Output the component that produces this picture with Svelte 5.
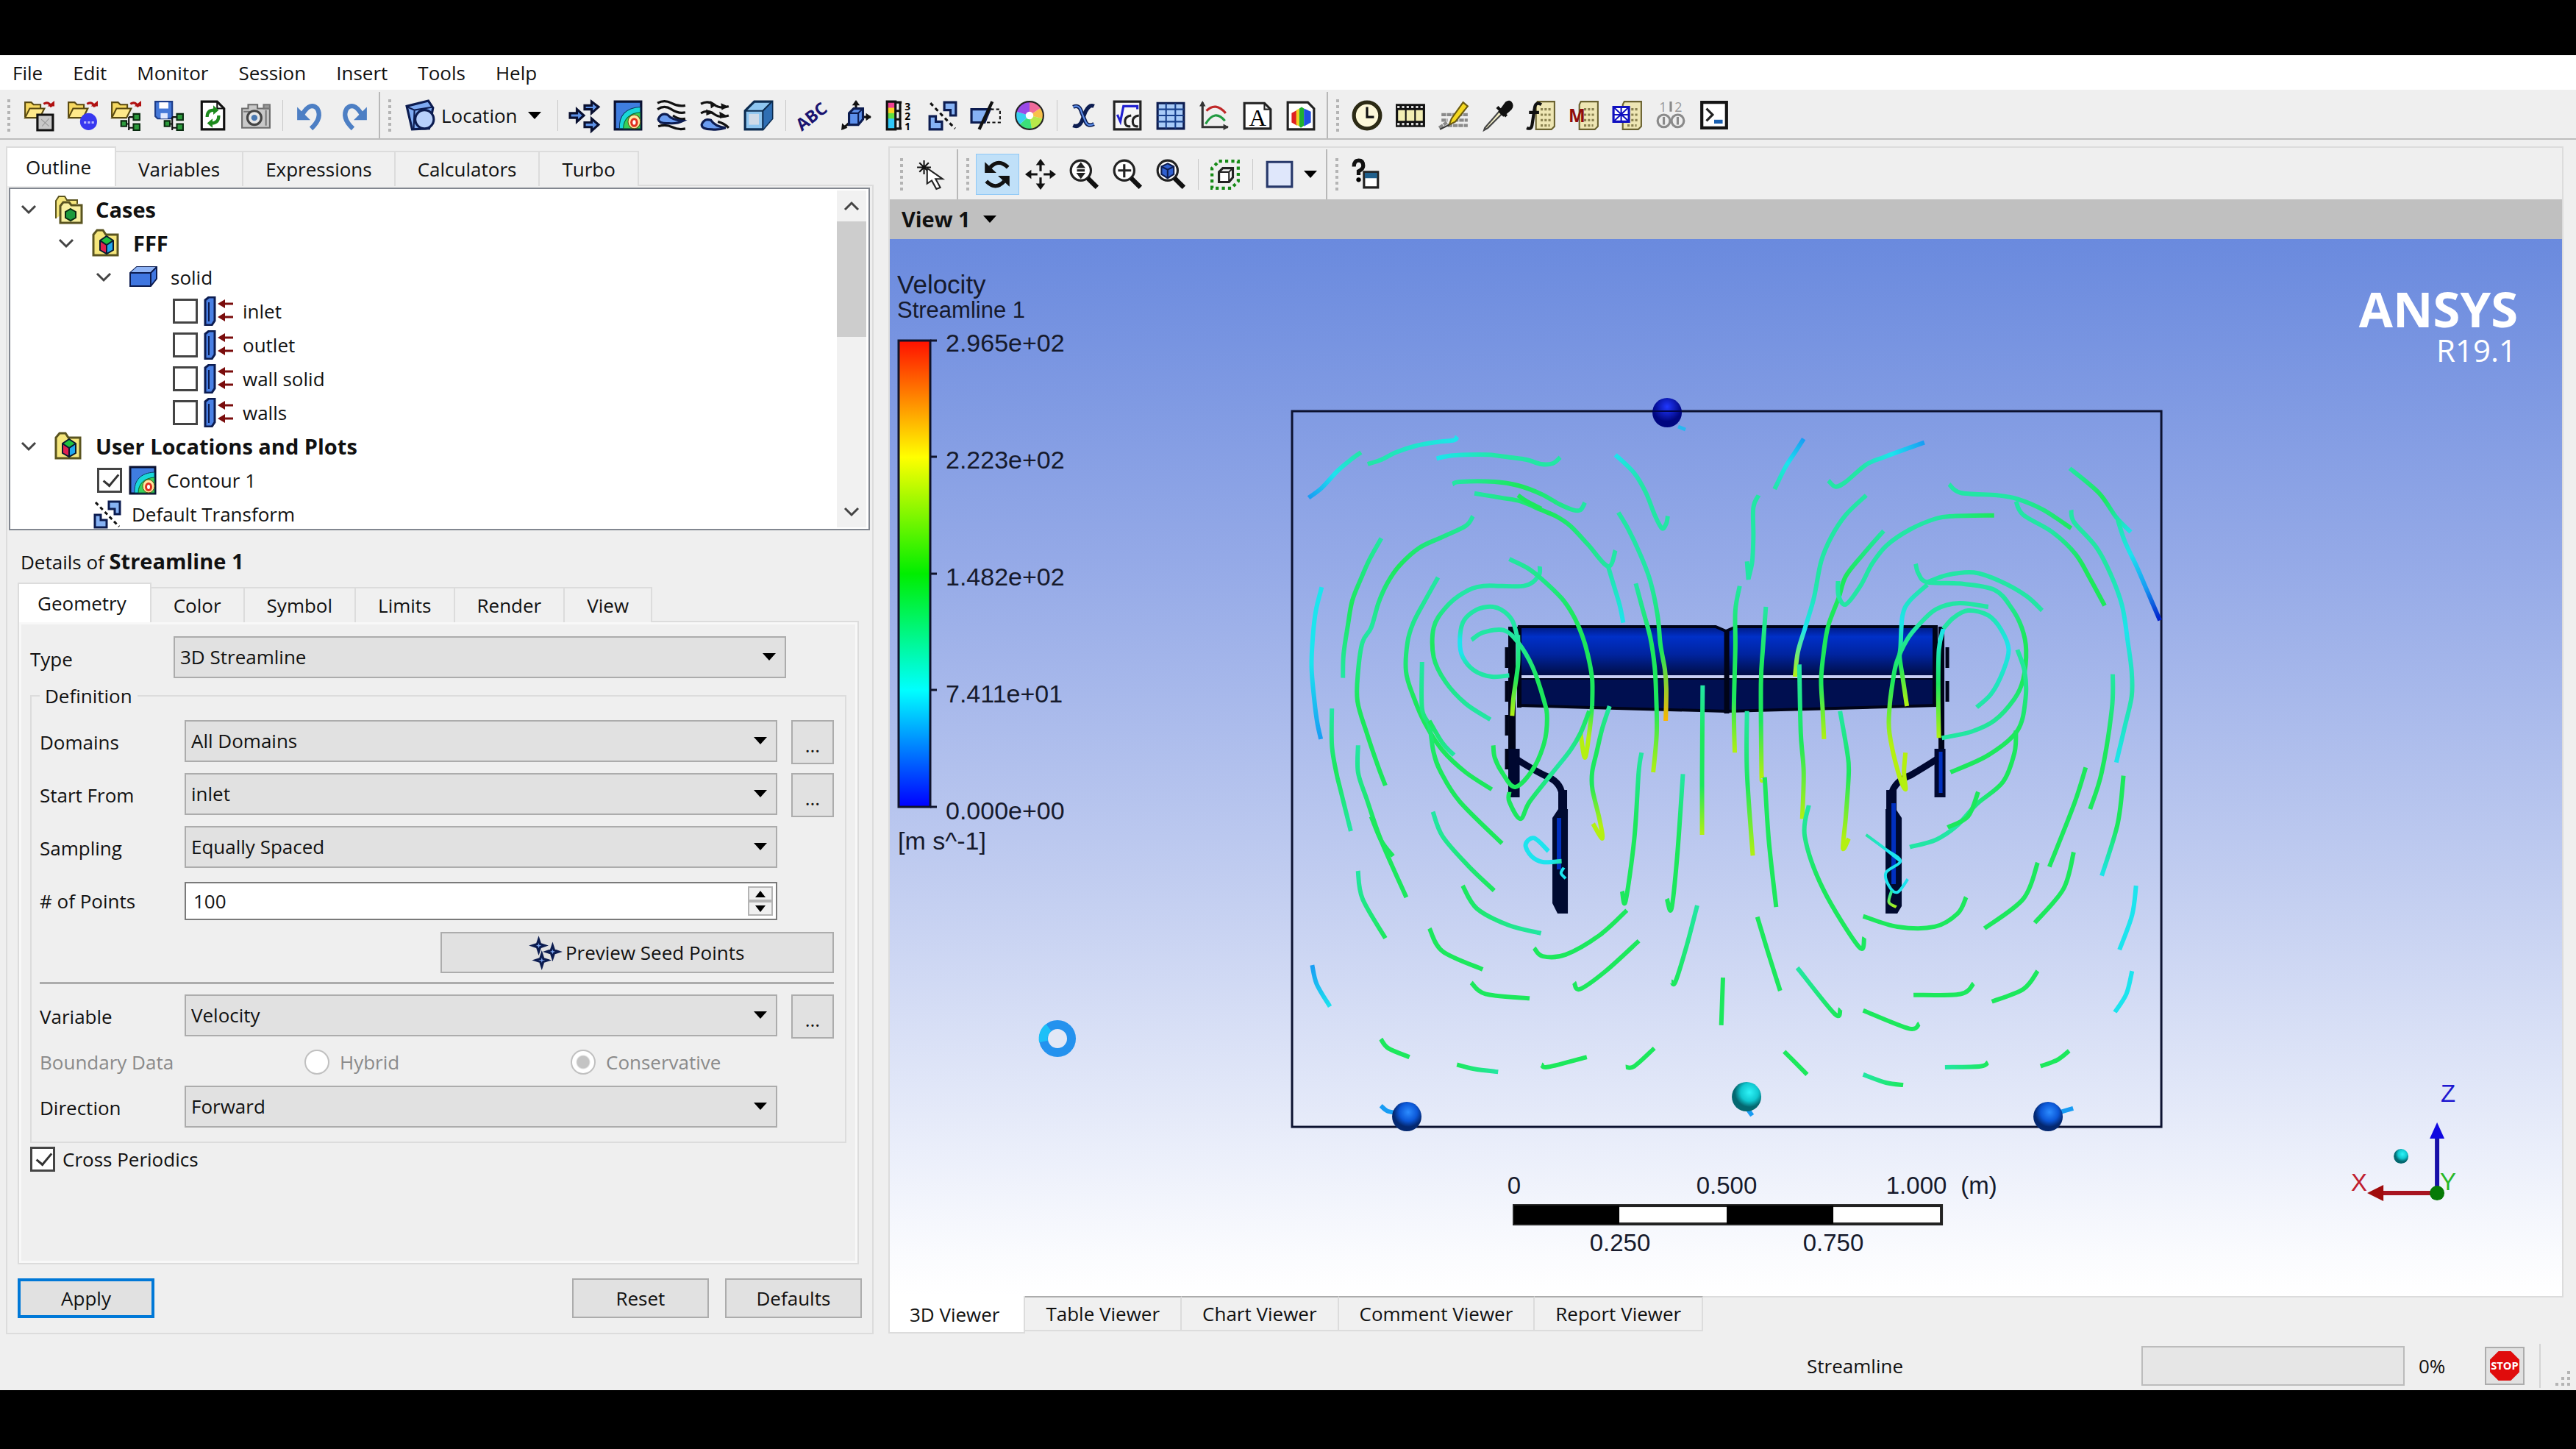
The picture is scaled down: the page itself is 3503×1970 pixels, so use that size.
<script>
  const menus = ['File', 'Edit', 'Monitor', 'Session', 'Insert', 'Tools', 'Help'];

  const folder =
    '<path d="M2 22V3h8l3 3h9v5" fill="#f6d860" stroke="#5a4a10" stroke-width="2"/><path d="M2 23 8 11h19l-6 12z" fill="#ffe98a" stroke="#5a4a10" stroke-width="2"/><path d="M26 5q7-4 10 4" fill="none" stroke="#b01010" stroke-width="3"/><path d="M31 8h9v-7z" fill="#b01010"/>';
  const nodes =
    '<path d="M18 31h6M24 22v17M24 22h6M24 36h6" fill="none" stroke="#111" stroke-width="2"/><g fill="#2c9a3c" stroke="#0a2a10" stroke-width="2"><path d="M14 27h7v7h-7zM30 18h8v8h-8zM30 31h8v8h-8z"/></g>';
  const contour =
    '<path d="M3 2h34v36H3z" fill="#3f7de0" stroke="#0a1030" stroke-width="3"/><path d="M9 37C8 20 17 10 36 9v28z" fill="#19d8d8" stroke="#0c3c60" stroke-width="1"/><path d="M14 37c0-12 8-20 22-21v21z" fill="#37d05a" stroke="#106030" stroke-width="1"/><ellipse cx="28" cy="28" rx="8" ry="9" fill="#ffe9a0" stroke="#605010" stroke-width="1"/><ellipse cx="28" cy="29" rx="5" ry="6" fill="#e03020"/><ellipse cx="28" cy="29" rx="2" ry="3" fill="#fff"/>';
  const transform =
    '<path d="M22 3h15v17h-7v-7h-8zM3 21h8v7h8v10H3z" fill="#86b2f4" stroke="#0c1c50" stroke-width="3"/><path d="M4 4 36 37" stroke="#111" stroke-width="3" stroke-dasharray="5 4"/>';
  const lens = '<circle cx="16" cy="15" r="13" fill="#fff" stroke="#222" stroke-width="3"/><path d="m25 25 12 12" stroke="#111" stroke-width="6"/>';
  const calc =
    '<path d="M16 2h22v32l-4 4H14V6z" fill="#eee6b4" stroke="#6a6230" stroke-width="2"/><path d="M20 12h14M20 19h14M20 26h14M20 33h12" stroke="#8a8250" stroke-width="3" stroke-dasharray="3 2"/>';
  const cubes =
    '<path d="m21 10 9 6-9 6-9-6z" fill="#20c040"/><path d="m12 16 9 6v12l-9-5z" fill="#e02050"/><path d="m30 16-9 6v12l9-5z" fill="#20a8f0"/><path d="m21 10 9 6v13l-9 5-9-5V16zM12 16l9 6 9-6M21 22v12" fill="none" stroke="#0a1a30" stroke-width="2"/>';
  const caseFolder = '<path d="M3 36V8l5-6h8l4 6h16v28z" fill="#f5e67c" stroke="#5a5420" stroke-width="3"/>';

  const icons = {
    openResults: folder + '<path d="M18 19h20v20H18z" fill="#c8c8c8" stroke="#111" stroke-width="3"/><path d="m23 25 10 9M33 24l-9 10" stroke="#999" stroke-width="1"/>',
    openState: folder + '<circle cx="28" cy="28" r="11" fill="#3838f0"/><path d="M22 29h13" stroke="#b8b8ff" stroke-width="3" stroke-dasharray="3 2"/>',
    openCase: folder + nodes,
    saveState: '<path d="M2 2h22v22H5l-3-3z" fill="#4478d8" stroke="#1c3c88" stroke-width="2"/><path d="M7 3h12v8H7z" fill="#fff"/><path d="M9 17h9v7H9z" fill="#dfe8ff"/>' + nodes,
    reload: '<path d="M6 2h20l9 9v27H6z" fill="#fff" stroke="#111" stroke-width="3"/><path d="M26 2v9h9" fill="none" stroke="#111" stroke-width="2"/><path d="M13 22q0-9 9-9M28 20q0 10-9 10" fill="none" stroke="#1d8a1d" stroke-width="4"/><path d="m21 7 7 6-7 6zM20 24l-7 6 7 6z" fill="#1d8a1d"/>',
    camera: '<path d="M2 11h8V6h12v5h16v25H2z" fill="#c9c9c9" stroke="#6c6c6c" stroke-width="2"/><path d="M30 6h8v5h-8zM4 15h8M33 13v20" fill="#999" stroke="#777" stroke-width="2"/><circle cx="18" cy="23" r="9" fill="#e8e8e8" stroke="#444" stroke-width="3"/><circle cx="18" cy="23" r="4" fill="#4a78b0"/>',
    undo: '<path d="M10 18Q20 2 29 11q7 12-8 26" fill="none" stroke="#4d7fc4" stroke-width="6"/><path d="M3 9v17h17z" fill="#4d7fc4"/>',
    redo: '<path d="M30 18Q20 2 11 11q-7 12 8 26" fill="none" stroke="#4d7fc4" stroke-width="6"/><path d="M37 9v17H20z" fill="#4d7fc4"/>',
    location: '<path d="m2 8 28-7 6 9-5 27-22 1z" fill="#7eaaf2" stroke="#0c1c50" stroke-width="3"/><path d="m3 9 9 4 24-4M12 13l-1 24" fill="none" stroke="#0c1c50" stroke-width="2"/><circle cx="25" cy="25" r="12" fill="#b8d0fa" stroke="#0c1c50" stroke-width="3"/>',
    vector: '<g fill="#5f93e8" stroke="#0a1030" stroke-width="3"><path d="M20 7h9V2l9 7-9 8v-5h-9zM1 17h9v-5l9 8-9 8v-5H1zM20 29h9v-5l9 8-9 8v-5h-9z"/></g>',
    contour,
    streamline: '<path d="M2 4q9-5 18 0t18 3M2 12q9-6 18 0t18 4M22 20q8 6 16 4M3 34q10-3 18 1t17 2" fill="none" stroke="#111" stroke-width="3"/><path d="M3 25q3-9 12-6 6 7 20 8-8 4-18 3-13 1-14-5z" fill="#6a9cf0" stroke="#0c1c50" stroke-width="3"/>',
    particle: '<path d="M2 5q9-5 17 1t19 2M2 17q9-5 17 1t19 2M24 28q8 2 14 8" fill="none" stroke="#111" stroke-width="3"/><path d="M14 1l8 5-7 5zM28 4l9 4-8 5zM9 12l8 5-8 3zM26 15l9 5-8 4z" fill="#111"/><path d="M3 32q3-9 12-6 5 8 19 10-8 3-18 2-13 0-13-6z" fill="#6a9cf0" stroke="#0c1c50" stroke-width="3"/>',
    volume: '<path d="m3 14 12-12h23v22L26 38H3z" fill="#8ec6f0" stroke="#0c2c50" stroke-width="3"/><path d="M26 14 38 2v22L26 38z" fill="#2f6fb4"/><path d="M3 14h23v24M26 14 38 2" fill="none" stroke="#0c2c50" stroke-width="2"/><path d="M8 18h13v14H8z" fill="#cfdbe8"/>',
    text: '<g transform="rotate(-38 20 20)"><text x="-4" y="28" font-size="22" font-weight="700" fill="#1a1470">ABC</text></g>',
    coordFrame: '<path d="M20 2v12M28 22h11M13 28 3 37" fill="none" stroke="#111" stroke-width="3"/><path d="m20 0 5 7H15zM40 22l-7-5v10zM1 39l1-9 7 6z" fill="#111"/><path d="m11 17 6-6h12v14l-6 7H11z" fill="#5c90ec" stroke="#0c1c50" stroke-width="3"/><path d="M11 17h12v15M23 17l6-6" fill="none" stroke="#0c1c50" stroke-width="2"/>',
    legend: '<path d="M4 2h11v9H4z" fill="#f04090"/><path d="M4 10h11v8H4z" fill="#f8d020"/><path d="M4 17h11v8H4z" fill="#60e040"/><path d="M4 24h11v14H4z" fill="#30c8f8"/><path d="M4 2h11v36H4zM15 3h8M15 14h6M15 25h6M15 37h8M21 3v34" fill="none" stroke="#111" stroke-width="3"/><text x="27" y="13" font-size="13" font-weight="700">3</text><text x="27" y="26" font-size="13" font-weight="700">2</text><text x="27" y="39" font-size="13" font-weight="700">1</text>',
    transform,
    clip: '<path d="M1 12h24l-7 17H1z" fill="#86b2f4" stroke="#0c1c50" stroke-width="3"/><path d="M26 12h12v17H21" fill="none" stroke="#111" stroke-width="2" stroke-dasharray="4 3"/><path d="M28 2 11 38" stroke="#111" stroke-width="4"/>',
    colorMap: '<path d="M20 20V2a18 18 0 0 1 15 8z" fill="#f06a9a"/><path d="m20 20 15-10a18 18 0 0 1 2 14z" fill="#f8c04a"/><path d="m20 20 17 4a18 18 0 0 1-14 14z" fill="#b8e84a"/><path d="m20 20 3 18a18 18 0 0 1-16-6z" fill="#3ce07a"/><path d="M20 20 7 32a18 18 0 0 1-4-17z" fill="#38d0f0"/><path d="M20 20 3 15A18 18 0 0 1 20 2z" fill="#9a4ae8"/><circle cx="20" cy="20" r="18" fill="none" stroke="#222" stroke-width="2"/><circle cx="20" cy="20" r="5" fill="#fff"/>',
    variable: '<path d="M6 9q8-4 11 7l5 12q3 7 11 3M33 8q-6-3-11 7l-5 13q-4 8-11 5" fill="none" stroke="#0c1c50" stroke-width="5"/><path d="M6 9q8-4 11 7l5 12q3 7 11 3" fill="none" stroke="#5a8ce8" stroke-width="2"/>',
    expression: '<path d="M3 2h34v36H3z" fill="#f6f6f6" stroke="#222" stroke-width="3"/><path d="m7 19 4 9 4-20h18v4" fill="none" stroke="#2020d0" stroke-width="3"/><path d="M25 20q-8 1-8 8t7 6M35 20q-8 1-8 8t7 6" fill="none" stroke="#222" stroke-width="3"/>',
    table: '<path d="M3 4h34v33H3z" fill="#a8cbf8" stroke="#0c1c50" stroke-width="3"/><path d="M3 12h34M3 20h34M3 28h34M14 4v33M26 4v33" stroke="#18408c" stroke-width="2"/>',
    chart: '<path d="M5 3v32h33" fill="none" stroke="#333" stroke-width="3"/><path d="M1 8l4-7 4 7zM32 31l7 4-7 4z" fill="#333"/><path d="M10 14q12-12 25 3" fill="none" stroke="#c02828" stroke-width="3"/><path d="M9 31q12-20 25-4" fill="none" stroke="#209a40" stroke-width="3"/>',
    comment: '<path d="M3 4h26l8 8v25H3z" fill="#fff" stroke="#222" stroke-width="3"/><path d="M29 4v8h8" fill="none" stroke="#222" stroke-width="2"/><text class="serif" x="9" y="33" font-size="31">A</text>',
    figure: '<path d="M3 3h26l8 8v27H3z" fill="#fff" stroke="#222" stroke-width="3"/><path d="m8 17 7-4v20l-7-4z" fill="#e02020"/><path d="m14 13 4-2v23l-4-2z" fill="#f0d020"/><path d="m18 11 3-2 3 2v22l-4 3-2-2z" fill="#20b030"/><path d="m24 11 9 4v14l-9 5z" fill="#2050e0"/>',
    clock: '<circle cx="20" cy="20" r="17" fill="#fdf8d8" stroke="#2c2a14" stroke-width="5"/><path d="M20 9v13h9" fill="none" stroke="#111" stroke-width="3"/>',
    film: '<path d="M1 5h38v30H1z" fill="#111"/><path d="M4 13h9v14H4zM15 13h10v14H15zM27 13h9v14h-9z" fill="#f2eeb4"/><path d="M3 9h34M3 31h34" stroke="#ddd" stroke-width="3" stroke-dasharray="3 3"/>',
    quickEdit: '<path d="M4 19h14M4 26h8M1 36l10-7M18 19h21M20 26h18M12 33h26" stroke="#8a8a8a" stroke-width="4" stroke-dasharray="6 1"/><path d="M32 3 17 24l-3 8 8-4L38 8z" fill="#f4d820" stroke="#6a5a10" stroke-width="2"/><path d="m2 38 12-6" stroke="#333" stroke-width="2"/>',
    probe: '<path d="M24 13 4 36l-1 3 5-3 20-20z" fill="#f0ecc4" stroke="#444" stroke-width="2"/><path d="m20 9 12 12M24 15l8-11q4-3 6 1t-3 8l-7 6z" fill="#111" stroke="#111" stroke-width="4"/>',
    functionCalc: calc + '<path d="M21 6q-8-5-9 6l-3 20q-1 7-7 4M5 16h13" fill="none" stroke="#111" stroke-width="4"/>',
    macroCalc: calc + '<text x="0" y="29" font-size="23" font-weight="700" fill="#900c0c">M</text>',
    meshCalc: calc + '<path d="M2 9h20v19H2z" fill="#fff" stroke="#1010c0" stroke-width="3"/><path d="m3 10 18 17M21 10 3 27M2 19h20M12 9v19" stroke="#1010c0" stroke-width="2"/>',
    compare: '<g fill="none" stroke="#8a8a8a" stroke-width="3"><circle cx="11" cy="27" r="8"/><circle cx="29" cy="27" r="8"/><path d="M11 22v10M29 22v10M20 2v13"/></g><text x="5" y="15" font-size="17" fill="#999">1</text><text x="25" y="15" font-size="17" fill="#999">2</text>',
    console: '<path d="M4 3h32v33H4z" fill="#fff" stroke="#151515" stroke-width="4"/><path d="m10 11 8 8-8 8" fill="none" stroke="#222" stroke-width="3"/><path d="M20 28h11" stroke="#1a60b0" stroke-width="5"/>',
    select: '<path d="m11 2 0 18M2 11h18M5 5l12 12M17 5 5 17" stroke="#111" stroke-width="2"/><path d="m15 12 0 20 6-4 6 11 5-2-6-11h9z" fill="#fff" stroke="#222" stroke-width="2"/>',
    rotate: '<path d="M11 11Q22-1 34 11M6 29q12 12 23 0" fill="none" stroke="#111" stroke-width="5"/><path d="M4 4v14h15zM36 36V22H21z" fill="#111"/>',
    pan: '<path d="M20 5v11M20 24v11M5 20h11M24 20h11" stroke="#111" stroke-width="3"/><path d="m20 0 6 8H14zM20 40l6-8H14zM0 20l8-6v12zM40 20l-8-6v12z" fill="#111"/>',
    zoom: lens + '<path d="m16 4 6 8H10zM16 26l6-8H10z" fill="#222"/><path d="M11 15h10" stroke="#222" stroke-width="3"/>',
    zoomBox: lens + '<path d="M16 7v17M8 15h17" stroke="#222" stroke-width="3"/>',
    fit: lens + '<path d="m16 6 8 4v10l-8 5-8-5V10z" fill="#3060d0" stroke="#0c1c50" stroke-width="2"/><path d="m8 10 8 4 8-4M16 14v11" fill="none" stroke="#0c1c50" stroke-width="2"/>',
    highlight: '<path d="M12 3h25v26l-9 9H3V12z" fill="none" stroke="#168a16" stroke-width="4" stroke-dasharray="4 4"/><path d="m12 17 5-5h13v12l-5 6H12z" fill="#fff" stroke="#222" stroke-width="3"/><path d="M12 17h13v13M25 17l5-5" fill="none" stroke="#222" stroke-width="2"/>',
    viewport: '<path d="M4 4h32v32H4z" fill="#dfe7fb" stroke="#27386a" stroke-width="3"/>',
    help: '<path d="M4 10q0-8 6-8t6 7q0 4-6 7v5" fill="none" stroke="#111" stroke-width="5"/><circle cx="10" cy="27" r="3"/><path d="M17 17h18v20H17z" fill="#fff" stroke="#222" stroke-width="3"/><path d="M18 18h16v7H18z" fill="#1f5f8c"/>',
    cases: '<path d="M3 32V8l4-6h8l3 5h14v5" fill="#f5e67c" stroke="#5a5420" stroke-width="2"/><path d="M9 38V15l4-5h8l3 4h14v24z" fill="#f8f0a0" stroke="#5a5420" stroke-width="3"/><path d="m23 19 7 4v8l-7 4-7-4v-8z" fill="#1c9a3c" stroke="#0a2a10" stroke-width="2"/>',
    caseFile: caseFolder + cubes,
    plots: caseFolder + cubes,
    solid: '<path d="m2 14 9-8h27v16l-8 10H2z" fill="#3f76e0" stroke="#0c1c50" stroke-width="2"/><path d="m2 14 9-8h27l-8 8z" fill="#8fb4f6"/><path d="M2 14h28v18M30 14l8-8" fill="none" stroke="#0c1c50" stroke-width="2"/>',
    boundary: '<path d="M2 5 7 1h8v32l-4 6H2z" fill="#4a80e4" stroke="#0c1c50" stroke-width="3"/><path d="M7 8v26" stroke="#0c1c50" stroke-width="2"/><path d="M24 10h16M24 28h16" stroke="#7a0c0c" stroke-width="3"/><path d="m19 10 10-6v12zM19 28l10-6v12z" fill="#7a0c0c"/>',
    seeds: '<g fill="#7ea6ee" stroke="#0c1c50" stroke-width="3"><path d="m11 3 2 6 6 2-6 2-2 6-2-6-6-2 6-2zM29 11l2 6 6 2-6 2-2 6-2-6-6-2 6-2zM15 22l2 6 6 2-6 2-2 6-2-6-6-2 6-2z"/></g>',
    stop: '<path d="M12 1h16l11 11v16L28 39H12L1 28V12z" fill="#e00c0c"/><text x="20" y="25" font-size="14" font-weight="700" text-anchor="middle" fill="#fff">STOP</text>'
  };

  const mainTools = [
    ['grip', 'openResults', 'openState', 'openCase', 'saveState', 'reload', 'camera', 'sep', 'undo', 'redo', 'line'],
    ['grip', 'location*', 'sep', 'vector', 'contour', 'streamline', 'particle', 'volume', 'sep', 'text', 'coordFrame', 'legend', 'transform', 'clip', 'colorMap', 'sep', 'variable', 'expression', 'table', 'chart', 'comment', 'figure', 'line'],
    ['grip', 'clock', 'film', 'quickEdit', 'probe', 'functionCalc', 'macroCalc', 'meshCalc', 'compare', 'console']
  ].flat();
  const viewTools = ['grip', 'select', 'line', 'grip', 'rotate', 'pan', 'zoom', 'zoomBox', 'fit', 'sep', 'highlight', 'sep', 'viewport*', 'line', 'grip', 'help'];

  const outlineTabs = ['Outline', 'Variables', 'Expressions', 'Calculators', 'Turbo'];
  const detailTabs = ['Geometry', 'Color', 'Symbol', 'Limits', 'Render', 'View'];
  const viewerTabs = ['3D Viewer', 'Table Viewer', 'Chart Viewer', 'Comment Viewer', 'Report Viewer'];

  const tree = [
    { depth: 0, open: true, icon: 'cases', label: 'Cases', bold: true },
    { depth: 1, open: true, icon: 'caseFile', label: 'FFF', bold: true },
    { depth: 2, open: true, icon: 'solid', label: 'solid' },
    { depth: 3, check: true, checked: false, icon: 'boundary', label: 'inlet' },
    { depth: 3, check: true, checked: false, icon: 'boundary', label: 'outlet' },
    { depth: 3, check: true, checked: false, icon: 'boundary', label: 'wall solid' },
    { depth: 3, check: true, checked: false, icon: 'boundary', label: 'walls' },
    { depth: 0, open: true, icon: 'plots', label: 'User Locations and Plots', bold: true },
    { depth: 1, check: true, checked: true, icon: 'contour', label: 'Contour 1' },
    { depth: 1, icon: 'transform', label: 'Default Transform' }
  ];

  const legend = ['2.965e+02', '2.223e+02', '1.482e+02', '7.411e+01', '0.000e+00'];

  // Streamline colours by speed
  const speed = { d: '#0018c8', b: '#189cf4', c: '#1ce4ee', t: '#22e6a4', g: '#1ce85c', y: '#b4f010', o: '#ffb400' };

  // Each block has its own grid: origin, x step, y step, then "colours points"
  const blocks = [
    [1740, 530, 0.3954, 0.3333, [
      'bct 100,440 145,400 200,330 245,285 280,255',
      'tc 303,303 350,285 400,255 470,228 540,213 600,205 610,190',
      'ctt 540,280 580,270 640,265 720,265 790,275 850,285 900,303 940,300 965,275',
      'tgt 595,385 620,375 740,375 820,390 900,425 960,465 1010,490 1035,490 1050,460',
      'tgt 670,422 760,440 830,455 900,490 950,515 1000,555 1060,630 1130,720 1155,655',
      'gg 820,430 850,455 900,485',
      'tc 1130,720 1150,800 1170,880 1182,950',
      'ctt 1155,265 1220,340 1260,420 1290,510 1315,565 1330,545 1335,515',
      'tgtgg 665,515 640,555 560,600 480,645 410,720 370,790 340,870 315,970 285,1030 270,1150 268,1270 300,1400 340,1540 364,1614',
      'tgt 350,605 310,690 280,770 250,860 235,960 220,1080 218,1175',
      'ccb 145,805 125,900 115,1000 110,1130 120,1270 130,1360 142,1425',
      'tgg 545,765 500,860 460,950 440,1030 435,1150 460,1250 500,1360 560,1470 640,1560 730,1630',
      'tgg 490,1110 490,1300 515,1370 530,1480 555,1560 620,1680 765,1850',
      'gt 515,1350 560,1440 600,1490',
      'ttgt 895,720 890,760 840,800 700,800 630,830 570,890 530,970 530,1090 570,1190 640,1280 725,1345',
      'tgg 790,690 850,725 900,770 970,850 1010,920 1040,1000 1060,1080 1075,1180 1075,1290',
      'gy 1075,1290 1065,1400 1050,1500 1035,1400',
      'tgg 660,1020 700,990 770,980 820,1030 870,1130 910,1270 920,1340 910,1440 870,1550 810,1620 765,1560 740,1500 735,1450',
      'tcct 820,1020 800,940 760,895 715,885 665,905 630,950 620,1030 630,1090 670,1145 730,1170 790,1165',
      'tgy 820,1000 820,1120 805,1250 800,1330',
      'ttgo 1165,500 1200,570 1240,670 1275,780 1300,920 1310,1040 1325,1140 1330,1220 1328,1350',
      'tggy 1225,790 1250,900 1275,1010 1290,1130 1295,1240 1297,1400 1285,1560',
      'tggy 1455,1205 1453,1560 1453,1815',
      'tggy 1135,1290 1110,1380 1090,1480 1075,1560 1076,1630 1100,1750 1110,1830 1078,1770',
      'gtg 1065,1310 1035,1400 1000,1470 940,1560 860,1680 828,1750 790,1680 790,1640',
      'tgt 180,1300 180,1450 195,1560 210,1634 245,1800',
      'tgg 270,1450 270,1560 300,1670 350,1840 436,2070',
      'gg 315,1740 350,1840 390,1902',
      'tgg 1245,1480 1235,1560 1220,1830 1190,2085 1178,2045'
    ]],
    [2340, 530, 0.3954, 0.3333, [
      'bct 285,200 255,255 220,320 185,405',
      'bctt 700,215 640,240 560,275 500,305 430,375 395,395 370,370',
      'tt 130,430 112,480 112,600 108,700 95,770',
      'tt 90,700 95,775',
      'tggy 65,800 50,900 50,1050 45,1300 48,1480',
      'tggy 155,885 145,1050 138,1200 140,1560 142,1580',
      'tttcy 500,430 430,510 380,600 345,700 320,850 290,970 265,1070 255,1170',
      'tgggy 560,575 490,670 430,760 405,850 370,960 355,1060 345,1180 350,1300 355,1425',
      'gttt 940,512 800,515 740,525 650,570 570,635 520,710 480,800 430,875 405,840 403,780',
      'ttg 785,385 825,420 950,430 1020,445 1110,490 1205,565',
      'ttgg 1015,455 1040,510 1140,580 1220,670 1270,770 1320,880',
      'ttctc 1205,490 1215,540 1290,640 1340,750 1380,880 1400,1030 1413,1150 1413,1250 1390,1370 1360,1520',
      'tgc 1200,320 1300,420 1360,520 1410,580',
      'tcbd 1365,530 1390,620 1430,720 1470,830 1510,940',
      'ttggt 670,710 680,750 710,785 820,790 940,815 1000,890 1035,970 1050,1060 1040,1180 1010,1260 940,1350 860,1395 760,1420',
      'tt 710,785 780,755 870,745 960,780 1050,840 1105,900',
      'tcgy 710,795 650,860 625,920 618,1050 615,1090 625,1170 640,1290',
      'ttgy 920,885 820,870 740,895 680,960 640,1020 605,1110 590,1200 580,1300 580,1400 610,1560 635,1630 630,1560 635,1480',
      'tct 765,975 800,930 850,900 920,920 965,980 990,1060 970,1150 930,1240 880,1295',
      'cgy 765,975 750,1060 748,1250 750,1420',
      'tgg 1020,1060 1045,1150 1048,1260 1020,1390 920,1490 790,1560',
      'ggtt 1015,1390 1010,1480 970,1600 880,1690 810,1780 740,1835 650,1865',
      'gg 885,1640 850,1740 780,1785',
      'tgg 1348,1160 1345,1300 1310,1560 1270,1710',
      'tgy 90,1310 90,1560 110,1900',
      'tgy 270,1120 275,1400 285,1560 280,1750',
      'tgy 410,1310 435,1480 440,1560 430,1740 420,1870 440,1830',
      'gg 1255,1540 1215,1690 1130,1945'
    ]],
    [1740, 1030, 0.778, 0.4464, [
      'gg 848,60 855,250 868,455',
      'tgg 705,50 695,300 685,460 677,430',
      'cct 470,285 445,245 430,265 440,300 460,318 493,315',
      'tg 268,165 285,240 330,330 375,405', 'tg 137,345 145,430 185,550', 'gt 320,390 345,460 400,510 457,535',
      'gg 262,520 285,590 355,645', 'gg 335,685 360,720 437,733', 'gg 445,580 460,605 500,600 560,540 607,465',
      'gg 515,685 525,705 570,650 628,558', 'tg 730,450 712,570 692,682 685,682', 'gg 835,485 855,600 875,710',
      'gg 775,670 772,815', 'tg 905,640 970,780 980,765', 'gg 1020,770 1100,825 1118,810',
      'gg 1108,723 1190,720 1213,688', 'gg 1245,743 1300,705 1325,650', 'gg 1232,520 1300,430 1325,320',
      'gg 1320,503 1370,400 1388,288', 'gg 1020,483 1080,515 1145,515 1185,475 1200,425',
      'tgg 925,145 918,240 950,400 1012,575 1022,548', 'ggc 1475,55 1465,200 1437,360',
      'ccc 1497,390 1490,480 1468,585', 'cc 1490,650 1480,720 1460,775', 'bc 57,632 65,690 88,758',
      'gg 177,857 190,885 227,912', 'gt 310,935 340,948 382,957', 'gg 458,935 470,942 537,912',
      'gg 605,942 620,940 655,885', 'gg 882,895 922,965', 'tg 1020,965 1060,990 1090,997',
      'tg 1163,943 1225,940 1238,928', 'gg 1330,940 1360,920 1380,893', 'bb 177,1060 188,1076 205,1082',
      'bb 818,1070 826,1090', 'bb 1360,1082 1387,1068'
    ]]
  ];
  const strutSwirls = [
    [1740, 1030, 0.778, 0.4464, [
      'tcc 1025,235 1060,280 1085,315 1060,350 1065,390 1080,410 1098,370',
      'ty 1070,405 1065,440 1078,455',
      'cc 1085,315 1060,280', 'cc 497,335 492,352 500,368'
    ]]
  ];

  function build(source, prefix) {
    return source.flatMap(([ox, oy, sx, sy, lines], b) =>
      lines.map((line, i) => {
        const [tones, ...raw] = line.split(' ');
        const p = raw.map((r) => {
          const [x, y] = r.split(',').map(Number);
          return [ox + x * sx, oy + y * sy];
        });
        let d = `M${p[0]}`;
        for (let k = 0; k < p.length - 1; k++) {
          const a = p[k - 1] ?? p[k], q = p[k], r = p[k + 1], s = p[k + 2] ?? r;
          d += `C${[q[0] + (r[0] - a[0]) / 6, q[1] + (r[1] - a[1]) / 6]} ${[r[0] - (s[0] - q[0]) / 6, r[1] - (s[1] - q[1]) / 6]} ${r}`;
        }
        const e = p[p.length - 1];
        return { id: `${prefix}${b}-${i}`, d, from: p[0], to: [e[0] + 1, e[1] + 1], tones: [...tones].map((t) => speed[t]) };
      })
    );
  }
  const streams = build(blocks, 's');
  const swirls = build(strutSwirls, 'w');
</script>

{#snippet icon(name, cls = 'icon')}
  <svg class={cls} viewBox="0 0 40 40" aria-hidden="true">{@html icons[name]}</svg>
{/snippet}

{#snippet caret()}
  <svg class="caret" viewBox="0 0 18 12" aria-hidden="true"><path d="M0 1h18l-9 10z" /></svg>
{/snippet}

{#snippet tools(items)}
  {#each items as t}
    {#if t === 'grip' || t === 'sep' || t === 'line'}
      <span class={t}></span>
    {:else if t.endsWith('*')}
      <button class="tool drop" class:labelled={t === 'location*'} aria-label={t.slice(0, -1)}>
        {@render icon(t.slice(0, -1))}
        {#if t === 'location*'}<span class="tool-text">Location</span>{/if}
        {@render caret()}
      </button>
    {:else}
      <button class="tool" class:pressed={t === 'rotate'} aria-label={t}>{@render icon(t)}</button>
    {/if}
  {/each}
{/snippet}

{#snippet combo(id, value)}
  <span class="combo">
    <select {id}><option>{value}</option></select>
    {@render caret()}
  </span>
{/snippet}

{#snippet lines(list)}
  {#each list as s}
    <linearGradient id={s.id} gradientUnits="userSpaceOnUse" x1={s.from[0]} y1={s.from[1]} x2={s.to[0]} y2={s.to[1]}>
      {#each s.tones as c, i}<stop offset={i / (s.tones.length - 1)} stop-color={c} />{/each}
    </linearGradient>
    <path d={s.d} stroke="url(#{s.id})" />
  {/each}
{/snippet}

<div class="screen">
  <div class="window">
    <nav class="menu">
      {#each menus as m}<button>{m}</button>{/each}
    </nav>
    <div class="toolbar main-tools">{@render tools(mainTools)}</div>

    <main>
      <section class="side">
        <div class="tabs outline-tabs" role="tablist">
          {#each outlineTabs as t, i}<button role="tab" class:active={i === 0}>{t}</button>{/each}
        </div>
        <div class="outline">
          <div class="tree-box">
            <ul class="tree">
              {#each tree as row, i}
                <li class="depth{row.depth}" class:leaf={!row.open}>
                  {#if row.open}
                    <svg class="chevron" viewBox="0 0 22 14" aria-hidden="true"><path d="m2 2 9 9 9-9" /></svg>
                  {/if}
                  {#if row.check}<input type="checkbox" id="node{i}" checked={row.checked} />{/if}
                  {@render icon(row.icon, 'node-icon')}
                  {#if row.check}
                    <label for="node{i}">{row.label}</label>
                  {:else}
                    <span class:bold={row.bold}>{row.label}</span>
                  {/if}
                </li>
              {/each}
            </ul>
            <div class="scrollbar">
              <svg class="chevron" viewBox="0 0 22 14" aria-hidden="true"><path d="m2 12 9-9 9 9" /></svg>
              <span class="track"><span class="thumb"></span></span>
              <svg class="chevron" viewBox="0 0 22 14" aria-hidden="true"><path d="m2 2 9 9 9-9" /></svg>
            </div>
          </div>

          <h2>Details of <b class="bold">Streamline 1</b></h2>
          <div class="tabs detail-tabs" role="tablist">
            {#each detailTabs as t, i}<button role="tab" class:active={i === 0}>{t}</button>{/each}
          </div>
          <form class="details" onsubmit={(e) => e.preventDefault()}>
            <div class="type-row">
              <label for="type">Type</label>
              {@render combo('type', '3D Streamline')}
            </div>
            <fieldset>
              <legend>Definition</legend>
              <div class="row">
                <label for="domains">Domains</label>
                {@render combo('domains', 'All Domains')}
                <button class="push more" aria-label="Select domains">...</button>
              </div>
              <div class="row">
                <label for="start">Start From</label>
                {@render combo('start', 'inlet')}
                <button class="push more" aria-label="Select start location">...</button>
              </div>
              <div class="row">
                <label for="sampling">Sampling</label>
                {@render combo('sampling', 'Equally Spaced')}
              </div>
              <div class="row">
                <label for="points"># of Points</label>
                <span class="spin">
                  <input id="points" type="text" inputmode="numeric" value="100" />
                  <span class="steps">
                    <button aria-label="More points"><svg viewBox="0 0 14 9"><path d="M0 9h14L7 0z" /></svg></button>
                    <button aria-label="Fewer points"><svg viewBox="0 0 14 9"><path d="M0 0h14L7 9z" /></svg></button>
                  </span>
                </span>
              </div>
              <button class="push preview">{@render icon('seeds')}Preview Seed Points</button>
              <hr />
              <div class="row">
                <label for="variable">Variable</label>
                {@render combo('variable', 'Velocity')}
                <button class="push more" aria-label="Select variable">...</button>
              </div>
              <div class="radios">
                <span>Boundary Data</span>
                <label><input type="radio" name="boundary" disabled />Hybrid</label>
                <label><input type="radio" name="boundary" disabled checked />Conservative</label>
              </div>
              <div class="row">
                <label for="direction">Direction</label>
                {@render combo('direction', 'Forward')}
              </div>
            </fieldset>
            <label class="cross"><input type="checkbox" checked />Cross Periodics</label>
          </form>
          <div class="actions">
            <button class="push apply">Apply</button>
            <button class="push">Reset</button>
            <button class="push">Defaults</button>
          </div>
        </div>
      </section>

      <section class="viewer">
        <div class="frame">
          <div class="toolbar view-tools">{@render tools(viewTools)}</div>
          <button class="view-bar bold">View 1 {@render caret()}</button>
          <svg class="scene" viewBox="1210 325 2274 1437">
            <defs>
              <linearGradient id="sky" x2="0" y2="1"><stop stop-color="#6a8ade" /><stop offset="0.300" stop-color="#94a9e7" /><stop offset="0.600" stop-color="#c0ccf0" /><stop offset="0.960" stop-color="#fafbfe" /><stop offset="1" stop-color="#fff" /></linearGradient>
              <linearGradient id="ramp" x2="0" y2="1">
                <stop stop-color="#ff1000" /><stop offset="0.250" stop-color="#ffff00" /><stop offset="0.500" stop-color="#00ee00" /><stop offset="0.750" stop-color="#00ffff" /><stop offset="1" stop-color="#0000ff" />
              </linearGradient>
              <linearGradient id="wing" x2="0" y2="1"><stop stop-color="#001a80" /><stop offset="0.200" stop-color="#0030c8" /><stop offset="0.550" stop-color="#0024a0" /><stop offset="1" stop-color="#000c40" /></linearGradient>
              <radialGradient id="navy" cx="0.500" cy="0.300"><stop stop-color="#2038ff" /><stop offset="1" stop-color="#000680" /></radialGradient>
              <radialGradient id="blue" cx="0.550" cy="0.350"><stop stop-color="#2c8cff" /><stop offset="0.600" stop-color="#0c58d8" /><stop offset="1" stop-color="#042870" /></radialGradient>
              <radialGradient id="cyan" cx="0.600" cy="0.350"><stop stop-color="#30f4f8" /><stop offset="0.600" stop-color="#10c8d0" /><stop offset="1" stop-color="#046870" /></radialGradient>
            </defs>
            <rect x="1210" y="325" width="2274" height="1437" fill="url(#sky)" />

            <g class="annot">
              <text x="1220" y="399" font-size="35">Velocity</text>
              <text x="1220" y="432" font-size="31">Streamline 1</text>
              {#each legend as v, i}
                <text x="1286" y={478 + i * 159} font-size="34">{v}</text>
              {/each}
              <text x="1221" y="1155" font-size="34">[m s^-1]</text>
            </g>
            <rect x="1222" y="463" width="43" height="634" fill="url(#ramp)" stroke="#10142c" stroke-width="3" />
            <path d="M1265 463h9M1265 621h9M1265 780h9M1265 938h9M1265 1097h9" stroke="#10142c" stroke-width="3" />

            <g class="logo">
              <text x="3424" y="445" font-size="67" font-weight="700">ANSYS</text>
              <text x="3422" y="492" font-size="42">R19.1</text>
            </g>

            <rect x="1757" y="559" width="1182" height="973" fill="none" stroke="#0c1230" stroke-width="3" />

            <g class="model">
              <path d="M2066 852h267l14 6 14-6h272v68H2066z" fill="url(#wing)" stroke="#000418" stroke-width="4" />
              <path d="M2066 922h567v37l-100 3-185 5-185-5-97-3z" fill="#000f50" stroke="#000418" stroke-width="4" />
              <path d="M2066 920h567" stroke="#c6cff2" stroke-width="4" />
              <path d="M2348 856v114" stroke="#000418" stroke-width="7" />
              <path d="M2056 852v231" stroke="#000418" stroke-width="10" />
              <path d="M2640 852v170" stroke="#000418" stroke-width="8" />
              <path d="M2066 852v110M2631 852v108" stroke="#000418" stroke-width="6" />
              <path d="M2049 880v172M2648 880v84" stroke="#000418" stroke-width="5" stroke-dasharray="28 18" />
              <path d="M2059 1018v66M2638 1018v66" stroke="#000830" stroke-width="15" />
              <path d="M2639 1022v56" stroke="#0030c0" stroke-width="5" />
              <path d="M2062 1032q22 14 38 22 22 8 24 26v34M2634 1032q-22 14-36 22-22 8-26 26v34" fill="none" stroke="#000830" stroke-width="9" />
              <path d="M2125 1074v50" stroke="#000830" stroke-width="12" />
              <path d="M2572 1074v50" stroke="#000830" stroke-width="14" />
              <path d="M2111 1112 2119 1100h13v142h-14l-7-14z" fill="#000a30" />
              <path d="M2120 1112v70" stroke="#0030c0" stroke-width="6" />
              <path d="M2564 1100h14l8 12v120l-6 10h-16z" fill="#000a30" />
              <path d="M2575 1092v110" stroke="#0030c0" stroke-width="6" />
            </g>

            <g class="streams">{@render lines(streams)}</g>
            <g class="swirls">{@render lines(swirls)}</g>

            <circle cx="2267" cy="561" r="20" fill="url(#navy)" />
            <path d="M2247 559h40" stroke="#00054a" stroke-width="2" />
            <path d="m2282 580 10 4" stroke="#28b8f0" stroke-width="5" />
            <circle cx="1913" cy="1518" r="20" fill="url(#blue)" />
            <circle cx="2375" cy="1491" r="20" fill="url(#cyan)" />
            <circle cx="2785" cy="1518" r="20" fill="url(#blue)" />

            <circle cx="1438" cy="1412" r="19" fill="#e2e8f6" stroke="#2492ee" stroke-width="12" />
            <path d="M1419 1416a19 19 0 0 1 7-19" fill="none" stroke="#1cc0f8" stroke-width="12" />

            <rect x="2059" y="1639" width="581" height="25" fill="#fff" stroke="#222" stroke-width="4" />
            <path d="M2059 1639h143v25h-143zM2348 1639h145v25h-145z" />
            <g class="annot mid">
              <text x="2059" y="1623">0</text>
              <text x="2348" y="1623">0.500</text>
              <text x="2606" y="1623">1.000</text>
              <text x="2691" y="1623">(m)</text>
              <text x="2203" y="1701">0.250</text>
              <text x="2493" y="1701">0.750</text>
              <text x="3329" y="1498" class="z">Z</text>
              <text x="3208" y="1619" class="x">X</text>
              <text x="3329" y="1618" class="y">Y</text>
            </g>
            <path d="M3314 1620v-76" stroke="#1810a8" stroke-width="6" />
            <path d="m3314 1526 10 22h-20z" fill="#1008e0" />
            <path d="M3312 1622h-74" stroke="#a81420" stroke-width="6" />
            <path d="m3219 1622 22-11v22z" fill="#a00c0c" />
            <circle cx="3314" cy="1622" r="10" fill="#067a06" />
            <circle cx="3265" cy="1572" r="10" fill="url(#cyan)" />
          </svg>
        </div>
        <div class="tabs viewer-tabs" role="tablist">
          {#each viewerTabs as t, i}<button role="tab" class:active={i === 0}>{t}</button>{/each}
        </div>
      </section>
    </main>

    <footer>
      <span class="task">Streamline</span>
      <span class="progress"></span>
      <span class="percent">0%</span>
      <button class="push stop" aria-label="Stop">{@render icon('stop')}</button>
      <span class="divider"></span>
      <svg class="size-grip" viewBox="0 0 24 24" aria-hidden="true"><path d="M18 2h4v4h-4zM10 10h4v4h-4zM18 10h4v4h-4zM2 18h4v4H2zM10 18h4v4h-4zM18 18h4v4h-4z" /></svg>
    </footer>
  </div>
</div>

<style>
  :global(body) { background: #000; }
  .screen {
    box-sizing: border-box;
    min-height: 100vh;
    padding: 75px 0 80px;
    display: flex;
    background: #000;
    color: #111;
    font: 26px/36px "Open Sans", "Noto Sans", sans-serif;
  }
  .screen :global(*) { box-sizing: border-box; }
  button, select, input { font: inherit; color: inherit; margin: 0; }
  button { background: none; border: 0; padding: 0; }
  .window { flex: 1; min-width: 0; display: flex; flex-direction: column; background: #efefef; }
  .bold { font-size: 29px; font-weight: 700; }

  .menu { height: 47px; background: #fff; display: flex; align-items: center; gap: 41px; padding-left: 17px; }

  .toolbar { display: flex; align-items: center; }
  .main-tools { height: 68px; padding: 3px 0 0 10px; border-bottom: 2px solid #bdbdbd; }
  .view-tools { height: 70px; padding: 2px 0 0 14px; }
  .grip { width: 4px; height: 44px; margin-right: 9px; background: repeating-linear-gradient(#b4b4b4 0 4px, transparent 4px 8px); }
  .sep { width: 1px; height: 42px; margin: 0 7px; background: #c8c8c8; }
  .line { width: 2px; align-self: stretch; margin: 0 11px 0 5px; background: #b8b8b8; }
  .tool { flex: none; width: 59px; height: 56px; display: flex; align-items: center; justify-content: center; }
  .tool.pressed { background: #c0e0f8; border: 1px solid #90c8f6; }
  .tool.drop { width: auto; padding: 0 7px 0 8px; gap: 12px; }
  .tool.labelled { padding: 0 15px 0 10px; gap: 14px; }
  .tool-text { margin-left: -7px; }
  .icon { width: 42px; height: 42px; flex: none; overflow: visible; }
  .icon :global(.serif) { font-family: "Liberation Serif", serif; }
  .caret { width: 18px; height: 12px; flex: none; }

  main { flex: 1; display: flex; padding: 9px 17px 0 0; }
  .side { flex: 0 0 34.65%; min-width: 0; padding: 0 20px 0 8px; display: flex; flex-direction: column; }

  .tabs { display: flex; align-items: flex-end; position: relative; }
  .tabs button { height: 48px; border: 2px solid #dcdcdc; border-width: 2px 2px 0 0; padding: 0 30px; background: #f0f0f0; white-space: nowrap; }
  .tabs .active { height: 54px; background: #fff; border-left-width: 2px; padding: 0 32px 0 25px; }
  .outline-tabs { margin-bottom: -2px; }
  .outline { flex: 1; display: flex; flex-direction: column; border: 2px solid #dcdcdc; padding: 2px; }

  .tree-box { height: 466px; display: flex; background: #fff; border: 2px solid #828790; overflow: hidden; margin-right: 1px; }
  .tree { flex: 1; list-style: none; margin: 0; padding: 5px 0 0; }
  .tree li { height: 46px; display: flex; align-items: center; }
  .tree .chevron { margin: 0 23px 0 0; }
  .chevron { width: 22px; height: 14px; flex: none; }
  .chevron path { fill: none; stroke: #444; stroke-width: 3; }
  .node-icon { width: 40px; height: 40px; flex: none; margin-right: 17px; }
  .depth0 { padding-left: 14px; }
  .depth1 { padding-left: 65px; }
  .depth2 { padding-left: 116px; }
  .depth3 { padding-left: 221px; }
  .depth1.leaf { padding-left: 112px; }
  .depth1 input { margin-left: 6px; }
  .leaf .node-icon { margin-right: 13px; }
  .scrollbar { width: 40px; margin: 2px 3px 2px 0; background: #f1f1f1; display: flex; flex-direction: column; align-items: center; padding: 14px 0; }
  .track { flex: 1; width: 100%; margin: 14px 0; }
  .thumb { display: block; height: 42%; background: #cdcdcd; }

  input[type='checkbox'] { appearance: none; width: 34px; height: 34px; border: 3px solid #444; background: #fff; margin-right: 8px; flex: none; }
  input[type='checkbox']:checked::before { content: ""; display: block; width: 9px; height: 18px; margin: 1px 0 0 10px; border: solid #333; border-width: 0 3px 3px 0; transform: rotate(40deg); }

  h2 { margin: 24px 0 10px 16px; font-size: 26px; line-height: 36px; font-weight: 400; }
  .detail-tabs { margin: 0 12px -2px; }
  .details { flex: 1; margin: 0 16px 0 12px; border: 2px solid #dcdcdc; padding: 19px 15px 0; box-shadow: inset 0 0 0 3px #f8f8f8; }
  .type-row { display: grid; grid-template-columns: 195px 1fr; margin-right: 82px; align-items: center; }
  .type-row label { padding-top: 4px; }
  .combo { position: relative; display: flex; align-self: start; }
  .combo select { appearance: none; flex: 1; min-width: 0; height: 57px; padding: 0 60px 2px 7px; border: 2px solid #acacac; border-radius: 0; background: #e1e1e1; }
  .combo .caret { position: absolute; right: 14px; top: 22px; pointer-events: none; }
  fieldset { margin: 6px 0 0; padding: 15px 15px 16px 11px; border: 2px solid #dcdcdc; min-width: 0; display: flex; flex-direction: column; gap: 12px; }
  legend { padding: 0 7px; }
  .row { display: grid; grid-template-columns: 197px 1fr 58px; align-items: center; min-height: 60px; }
  .row .combo, .spin { margin-right: 19px; }
  .push { background: #e1e1e1; border: 2px solid #acacac; display: flex; align-items: center; justify-content: center; }
  .more { height: 60px; padding-top: 8px; }
  .spin { display: flex; height: 52px; background: #fff; border: 2px solid #7a7a7a; padding: 4px; }
  .spin input { flex: 1; min-width: 0; border: 0; padding: 0 6px; background: #fff; }
  .steps { display: flex; flex-direction: column; width: 34px; }
  .steps button { flex: 1; border: 2px solid #b4b4b4; background: #f0f0f0; display: flex; align-items: center; justify-content: center; }
  .steps svg { width: 14px; height: 9px; }
  .preview { align-self: flex-end; width: 49.5%; height: 56px; gap: 6px; }
  hr { width: 100%; margin: 0 0 2px; border: 0; border-top: 3px solid #acacac; }
  .radios { display: grid; grid-template-columns: 360px 362px 1fr; height: 40px; align-items: center; color: #8a8a8a; }
  .radios label { display: flex; align-items: center; }
  input[type='radio'] { appearance: none; width: 34px; height: 34px; margin-right: 14px; border: 2px solid #c0c0c0; border-radius: 50%; background: #fff; }
  input[type='radio']:checked { background: radial-gradient(#c4c4c4 0 8px, #fff 10px); }
  .cross { display: flex; align-items: center; margin-top: 4px; }
  .cross input { margin-right: 10px; }
  .actions { display: flex; gap: 22px; padding: 19px 12px 18px; }
  .actions .push { width: 186px; height: 54px; }
  .actions .apply { border: 4px solid #0078d7; margin-right: auto; }

  .viewer { flex: 1; min-width: 0; display: flex; flex-direction: column; }
  .frame { border: 2px solid #dcdcdc; }
  .view-bar { width: 100%; height: 54px; background: #c0c0c0; display: flex; align-items: center; gap: 17px; padding-left: 16px; }
  .scene { display: block; width: 100%; height: auto; font-family: "Open Sans", sans-serif; }
  .annot { font-family: "Liberation Sans", Arial, sans-serif; fill: #161a2c; }
  .mid { font-size: 33px; text-anchor: middle; }
  .z { fill: #2018d0; }
  .x { fill: #c02030; }
  .y { fill: #28b828; }
  .logo { fill: #fff; text-anchor: end; }
  .streams path { fill: none; stroke-width: 6; stroke-linejoin: round; }
  .swirls path { fill: none; stroke-width: 4; }
  .viewer-tabs { align-items: flex-start; margin-top: -2px; }
  .viewer-tabs button { height: 48px; border-width: 2px 2px 2px 0; border-top-color: #acacac; padding: 0 28px; }
  .viewer-tabs .active { height: 51px; border-top: 0; border-left: 2px solid #dcdcdc; padding: 0 33px 0 27px; }

  footer { height: 76px; display: flex; align-items: center; justify-content: flex-end; padding: 10px 6px 0 0; }
  .task { margin-right: 324px; }
  .progress { width: 358px; height: 54px; background: #e6e6e6; border: 2px solid #bcbcbc; }
  .percent { width: 109px; padding-left: 19px; }
  .stop { width: 54px; height: 52px; }
  .divider { width: 2px; height: 60px; margin: 0 18px 0 20px; background: #d4d4d4; }
  .size-grip { width: 24px; height: 24px; align-self: flex-end; margin-bottom: 4px; fill: #b4b4b4; }
</style>
